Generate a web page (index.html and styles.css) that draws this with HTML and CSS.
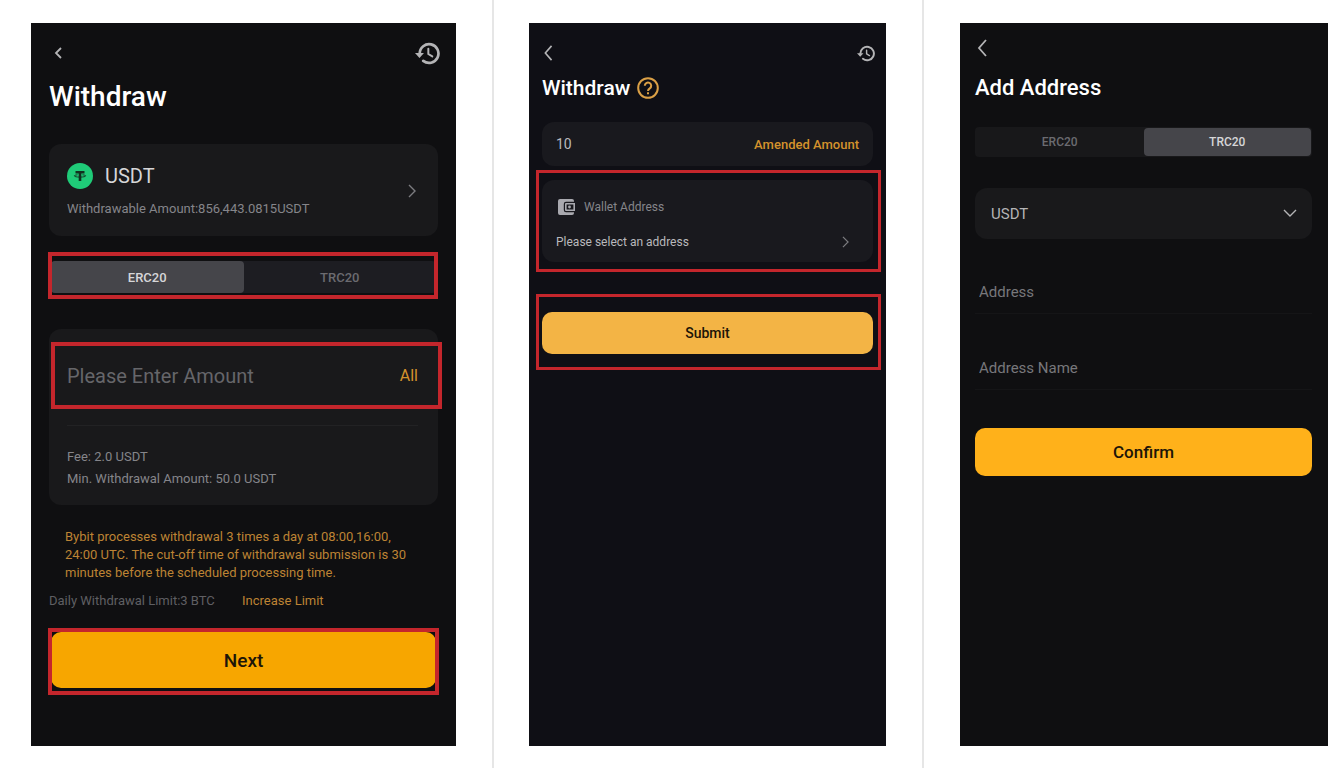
FILE: index.html
```html
<!DOCTYPE html>
<html lang="en">
<head>
    <meta charset="UTF-8">
    <meta name="viewport" content="width=device-width, initial-scale=1.0">
    <title>Withdraw</title>
    <link rel="stylesheet" href="styles.css">
</head>
<body>
    <!-- shared icon shapes -->
    <svg class="hidden" aria-hidden="true">
        <symbol id="history" viewBox="0 0 24 22">
            <path d="M4.5 11a9 9 0 1 1 3.400 7.100" fill="none" stroke="currentColor" stroke-width="2.600" stroke-linecap="round"/>
            <path d="M0 10.600h8.600l-4.300 4.600z" fill="currentColor"/>
            <path d="M12.800 6.500v5l3.800 2.300" fill="none" stroke="currentColor" stroke-width="1.900" stroke-linecap="round"/>
        </symbol>
        <symbol id="left" viewBox="0 0 10 18">
            <path d="M9 1L2 9l7 8" fill="none" stroke="currentColor" stroke-width="1.800"/>
        </symbol>
        <symbol id="right" viewBox="0 0 8 14">
            <path d="M1 1l6 6-6 6" fill="none" stroke="currentColor" stroke-width="1.400"/>
        </symbol>
    </svg>

    <main class="steps">
        <section class="step step-amount">
            <div class="phone">
                <header class="topbar">
                    <button type="button" class="icon-button back" aria-label="Back"><svg width="8" height="12" viewBox="0 0 8 12"><path d="M7 1L2 6l5 5" fill="none" stroke="currentColor" stroke-width="1.800"/></svg></button>
                    <button type="button" class="icon-button" aria-label="History"><svg width="25" height="23"><use href="#history"/></svg></button>
                </header>
                <h1>Withdraw</h1>

                <button type="button" class="card coin">
                    <span class="coin-info">
                        <span class="coin-name">
                            <svg width="26" height="26" viewBox="0 0 26 26">
                                <circle cx="13" cy="13" r="13" fill="#1fcb78"/>
                                <path d="M8.500 8h9v2.400h-3.200v7.600h-2.600v-7.600H8.500z" fill="#12301f"/>
                                <path d="M10.500 11.800c-2 .2-3.200.6-3.200 1.100 0 .7 2.500 1.200 5.700 1.200s5.700-.5 5.700-1.200c0-.5-1.200-.9-3.200-1.100" fill="none" stroke="#12301f" stroke-width="0.900"/>
                            </svg>
                            USDT
                        </span>
                        <span class="coin-balance">Withdrawable Amount:856,443.0815USDT</span>
                    </span>
                    <svg class="arrow" width="8" height="14"><use href="#right"/></svg>
                </button>

                <div class="tabs marked">
                    <button type="button" class="active">ERC20</button>
                    <button type="button">TRC20</button>
                </div>

                <div class="card amount">
                    <div class="amount-row marked">
                        <input type="text" placeholder="Please Enter Amount" aria-label="Amount">
                        <button type="button" class="link">All</button>
                    </div>
                    <div class="fees">
                        <p>Fee: 2.0 USDT</p>
                        <p>Min. Withdrawal Amount: 50.0 USDT</p>
                    </div>
                </div>

                <p class="notice">Bybit processes withdrawal 3 times a day at 08:00,16:00,<br>24:00 UTC. The cut-off time of withdrawal submission is 30<br>minutes before the scheduled processing time.</p>
                <p class="limit">Daily Withdrawal Limit:3 BTC <a href="#">Increase Limit</a></p>

                <div class="action marked">
                    <button type="button" class="primary">Next</button>
                </div>
            </div>
        </section>

        <section class="step step-wallet">
            <div class="phone">
                <header class="topbar">
                    <button type="button" class="icon-button" aria-label="Back"><svg width="12" height="16"><use href="#left"/></svg></button>
                    <button type="button" class="icon-button" aria-label="History"><svg width="18" height="17"><use href="#history"/></svg></button>
                </header>
                <h1>Withdraw
                    <svg width="22" height="22" viewBox="0 0 22 22" fill="none" stroke="#dba046" stroke-width="2">
                        <circle cx="11" cy="11" r="9.800"/>
                        <path d="M7.800 8.800a3.200 3.200 0 1 1 5 2.600c-1.200.8-1.800 1.300-1.800 2.600"/>
                        <path d="M11 15.200v2"/>
                    </svg>
                </h1>

                <div class="card amended">
                    <input type="text" value="10" aria-label="Amount">
                    <button type="button" class="link">Amended Amount</button>
                </div>

                <div class="card wallet marked">
                    <div class="wallet-title">
                        <svg width="17" height="16" viewBox="0 0 17 16" fill="#a9a9af">
                            <path d="M2 0h12a2 2 0 0 1 2 2v.8H8A2.200 2.200 0 0 0 5.800 5v6A2.200 2.200 0 0 0 8 13.200h8v.8a2 2 0 0 1-2 2H2a2 2 0 0 1-2-2V2a2 2 0 0 1 2-2z"/>
                            <path fill-rule="evenodd" d="M8 4h9v8H8a1 1 0 0 1-1-1V5a1 1 0 0 1 1-1zM8.600 5.500v5h6.800v-5z"/>
                            <circle cx="11.500" cy="8" r="1.400"/>
                        </svg>
                        Wallet Address
                    </div>
                    <button type="button" class="wallet-select">
                        Please select an address
                        <svg class="arrow" width="7" height="12"><use href="#right"/></svg>
                    </button>
                </div>

                <div class="action marked">
                    <button type="button" class="primary">Submit</button>
                </div>
            </div>
        </section>

        <section class="step step-address">
            <div class="phone">
                <header class="topbar">
                    <button type="button" class="icon-button" aria-label="Back"><svg width="14" height="18"><use href="#left"/></svg></button>
                </header>
                <h1>Add Address</h1>

                <div class="tabs">
                    <button type="button">ERC20</button>
                    <button type="button" class="active">TRC20</button>
                </div>

                <div class="card coin-select">
                    <select aria-label="Coin">
                        <option>USDT</option>
                    </select>
                    <svg width="14" height="8" viewBox="0 0 14 8"><path d="M1 1l6 6 6-6" fill="none" stroke="currentColor" stroke-width="1.400"/></svg>
                </div>

                <input class="field" type="text" placeholder="Address" aria-label="Address">
                <input class="field" type="text" placeholder="Address Name" aria-label="Address Name">

                <button type="button" class="primary">Confirm</button>
            </div>
        </section>
    </main>
</body>
</html>
```
FILE: styles.css
```css
* {
    box-sizing: border-box;
}

body {
    margin: 0;
    background-color: #ffffff;
    color: #ffffff;
    font-family: Roboto, "Liberation Sans", sans-serif;
}

button, input, select {
    margin: 0;
    padding: 0;
    border: 0;
    outline: 0;
    background: none;
    color: inherit;
    font-family: inherit;
    appearance: none;
}

button {
    cursor: pointer;
}

input {
    min-width: 0;
}

p {
    margin: 0;
}

svg {
    display: block;
    flex-shrink: 0;
}

.hidden {
    display: none;
}

/* columns */
.steps {
    display: grid;
    grid-template-columns: 494fr 430fr 416fr;
    min-height: 100vh;
}

.step {
    display: flex;
    padding: 23px 36px 22px 35px;
    border-right: 2px solid #e6e6e6;
}

.step-amount {
    padding-left: 31px;
}

.step-address {
    padding-left: 36px;
    padding-right: 12px;
    border-right: 0;
}

.phone {
    display: flex;
    flex-direction: column;
    flex: 1;
    min-width: 0;
    padding: 18px 18px 0;
    background-color: #0f0f11;
}

.step-wallet .phone {
    padding: 18px 13px 0;
    background-color: #0f0f15;
}

.step-address .phone {
    padding: 13px 16px 0 15px;
}

/* shared parts */
.topbar {
    display: flex;
    justify-content: space-between;
    align-items: center;
    height: 24px;
    color: #b4b4b6;
}

.topbar .icon-button:last-child:not(:first-child) {
    margin-right: -2px;
}

.icon-button.back {
    margin-left: 5px;
}

h1 {
    display: flex;
    align-items: center;
    gap: 7px;
    margin: 16px 0 31px;
    font-size: 28px;
    line-height: 32px;
    font-weight: 500;
}

.card {
    border-radius: 12px;
    background-color: #19191b;
}

.arrow {
    color: #7c7c80;
}

.link {
    color: #d4922c;
}

.tabs {
    display: flex;
    height: 32px;
    border-radius: 4px;
    background-color: #1d1d22;
}

.tabs button {
    flex: 1;
    border-radius: 4px;
    color: #6b6b70;
    font-size: 13px;
    font-weight: 500;
}

.tabs .active {
    background-color: #45454a;
    color: #d6d6d8;
}

.primary {
    width: 100%;
    height: 56px;
    border-radius: 10px;
    background-color: #f7a600;
    color: #1d1508;
    font-size: 19px;
    font-weight: 500;
}

/* red highlight frame drawn around an element */
.marked {
    position: relative;
}

.marked::after {
    content: "";
    position: absolute;
    inset: -9px -2px -6px -3px;
    border: 4px solid #c4262c;
    pointer-events: none;
}

/* step 1 */
.coin {
    display: flex;
    justify-content: space-between;
    align-items: center;
    height: 92px;
    padding: 2px 22px 0 18px;
    text-align: left;
}

.coin-info {
    display: flex;
    flex-direction: column;
    gap: 10px;
}

.coin-name {
    display: flex;
    align-items: center;
    gap: 12px;
    color: #d6d6d8;
    font-size: 20px;
    line-height: 26px;
}

.coin-balance {
    color: #85858a;
    font-size: 13px;
    line-height: 20px;
}

.step-amount .tabs {
    margin: 25px 2px 36px;
}

.amount {
    padding: 13px 20px 16px 18px;
}

.amount-row {
    display: flex;
    align-items: center;
    height: 67px;
}

.amount-row::after {
    inset: 0 -24px 0 -16px;
}

.amount-row input {
    flex: 1;
    font-size: 20px;
}

input::placeholder {
    color: #66666a;
    opacity: 1;
}

.amount-row .link {
    font-size: 16px;
}

.fees {
    margin-top: 16px;
    padding-top: 20px;
    border-top: 1px solid #222224;
    color: #85858a;
    font-size: 13px;
    line-height: 22px;
}

.amount {
    padding-bottom: 15px;
}

.notice {
    margin: 23px 0 10px 16px;
    color: #bd8334;
    font-size: 13px;
    line-height: 18px;
    white-space: nowrap;
}

.limit {
    margin-bottom: 22px;
    color: #5f5f63;
    font-size: 13px;
    line-height: 18px;
}

.limit a {
    margin-left: 24px;
    color: #bd8334;
    text-decoration: none;
}

.step-amount .action {
    margin: 0 2px;
}

.step-amount .action::after {
    inset: -4px -3px -7px;
}

/* step 2 */
.step-wallet h1 {
    margin: 11px 0 22px;
    font-size: 21px;
    line-height: 24px;
}

.step-wallet .card {
    background-color: #19191e;
}

.amended {
    display: flex;
    align-items: center;
    height: 44px;
    padding: 0 14px;
    color: #b9b9bd;
}

.amended input {
    flex: 1;
    font-size: 14px;
}

.amended .link {
    font-size: 13px;
    font-weight: 500;
}

.wallet {
    margin: 14px 0 50px;
    padding: 15px 14px 8px;
}

.step-wallet .marked::after {
    inset: -10px -8px -10px -6px;
    border-width: 3px;
}

.wallet-title {
    display: flex;
    align-items: center;
    gap: 9px;
    height: 24px;
    padding-left: 2px;
    color: #85858a;
    font-size: 12px;
}

.wallet-select {
    display: flex;
    justify-content: space-between;
    align-items: center;
    width: 100%;
    height: 24px;
    margin-top: 11px;
    padding-right: 10px;
    color: #b9b9bd;
    font-size: 12px;
}

.step-wallet .primary {
    height: 42px;
    background-color: #f3b445;
    font-size: 14px;
}

.step-wallet .action::after {
    inset: -18px -8px -16px -6px;
}

/* step 3 */
.step-address h1 {
    margin: 14px 0 25px;
    font-size: 22px;
    line-height: 28px;
}

.step-address .tabs {
    height: 30px;
    padding: 1px;
    background-color: #18181a;
}

.step-address .tabs button {
    font-size: 12px;
}

.coin-select {
    position: relative;
    height: 51px;
    margin: 31px 0 32px;
    color: #b4b4b6;
}

.coin-select select {
    width: 100%;
    height: 100%;
    padding: 0 16px;
    font-size: 15px;
}

.coin-select svg {
    position: absolute;
    top: 21px;
    right: 15px;
    pointer-events: none;
}

.field {
    height: 43px;
    margin-bottom: 33px;
    padding: 0 4px;
    border-bottom: 1px solid #151517;
    font-size: 15px;
}

.field::placeholder {
    color: #77777b;
}

.step-address .primary {
    height: 48px;
    margin-top: 5px;
    background-color: #ffb11a;
    font-size: 17px;
}
```
